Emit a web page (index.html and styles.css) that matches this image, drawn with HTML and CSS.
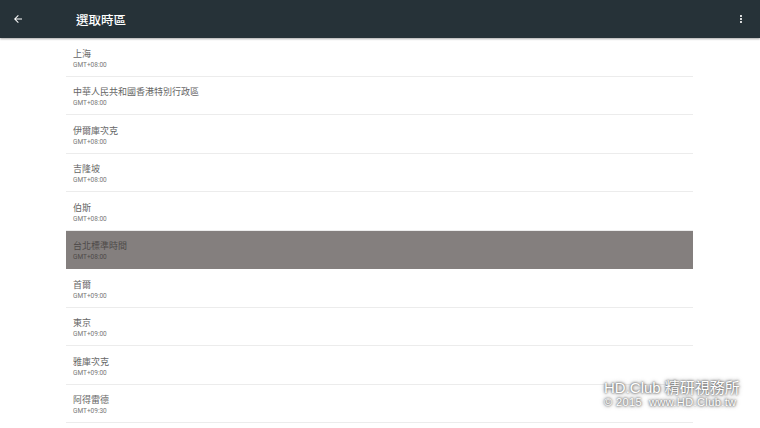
FILE: index.html
```html
<!DOCTYPE html>
<html lang="zh-Hant">
  <head>
    <meta charset="UTF-8" />
    <meta name="viewport" content="width=device-width, initial-scale=1.0" />
    <title>選取時區</title>
    <link rel="stylesheet" href="styles.css">
  </head>
  <body>
    <div class="toolbar">
      <svg class="back" viewBox="0 0 24 24" width="12" height="12">
        <path d="M20 11H7.83l5.59-5.59L12 4l-8 8 8 8 1.41-1.41L7.83 13H20v-2z" fill="#fff" />
      </svg>
      <h1 class="title">選取時區</h1>
      <svg class="menu" viewBox="0 0 24 24" width="12" height="12">
        <path d="M12 8c1.1 0 2-.9 2-2s-.9-2-2-2-2 .9-2 2 .9 2 2 2zm0 2c-1.1 0-2 .9-2 2s.9 2 2 2 2-.9 2-2-.9-2-2-2zm0 6c-1.1 0-2 .9-2 2s.9 2 2 2 2-.9 2-2-.9-2-2-2z" fill="#fff" />
      </svg>
    </div>

    <ul class="zones">
      <li><span class="name">上海</span><span class="offset">GMT+08:00</span></li>
      <li><span class="name">中華人民共和國香港特別行政區</span><span class="offset">GMT+08:00</span></li>
      <li><span class="name">伊爾庫次克</span><span class="offset">GMT+08:00</span></li>
      <li><span class="name">吉隆坡</span><span class="offset">GMT+08:00</span></li>
      <li><span class="name">伯斯</span><span class="offset">GMT+08:00</span></li>
      <li class="selected"><span class="name">台北標準時間</span><span class="offset">GMT+08:00</span></li>
      <li><span class="name">首爾</span><span class="offset">GMT+09:00</span></li>
      <li><span class="name">東京</span><span class="offset">GMT+09:00</span></li>
      <li><span class="name">雅庫次克</span><span class="offset">GMT+09:00</span></li>
      <li><span class="name">阿得雷德</span><span class="offset">GMT+09:30</span></li>
    </ul>

    <div class="watermark">
      <div class="mark-name">HD.Club 精研視務所</div>
      <div class="mark-site">© 2015&nbsp; www.HD.Club.tw</div>
    </div>
  </body>
</html>
```

FILE: styles.css
```css
html,
body {
  margin: 0;
  height: 100%;
  overflow: hidden;
}

body {
  font-family: Roboto, "Noto Sans CJK TC", sans-serif;
  background: #fff;
  position: relative;
}

.toolbar {
  height: 38px;
  background-color: #263238;
  display: flex;
  align-items: center;
  box-shadow: 0 1px 2px rgba(0, 0, 0, 0.35);
  position: relative;
  z-index: 1;
}

.back {
  margin-left: 12px;
}

.title {
  margin: 0 0 0 52px;
  font-size: 12.5px;
  font-weight: 500;
  color: #fff;
  flex: 1;
}

.menu {
  margin-right: 13px;
}

.zones {
  list-style: none;
  margin: 0 67px 0 66px;
  padding: 0;
}

.zones li {
  height: 38.5px;
  box-sizing: border-box;
  padding: 9.5px 0 0 7px;
  border-bottom: 1px solid #ececec;
  display: flex;
  flex-direction: column;
}

.zones li.selected {
  background-color: #847f7e;
  border-bottom-color: #847f7e;
}

.name {
  font-size: 9px;
  line-height: 12px;
  color: #666;
}

.offset {
  font-size: 6.5px;
  line-height: 10px;
  color: #777;
}

.selected .name,
.selected .offset {
  color: #4e4a49;
}

.watermark {
  position: absolute;
  left: 604px;
  top: 379px;
  color: #fff;
  font-family: "Liberation Sans", "Noto Sans CJK TC", sans-serif;
  text-shadow: 0 0 2px #666, 0 0 3px #777, 0 0 5px #999;
}

.mark-name {
  font-size: 15px;
  line-height: 17px;
}

.mark-site {
  font-size: 11px;
  line-height: 13px;
  letter-spacing: 0.4px;
}
```
